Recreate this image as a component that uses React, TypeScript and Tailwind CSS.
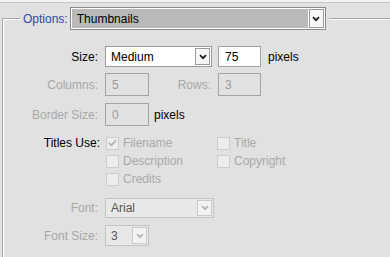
import React from 'react'

const font = { fontFamily: '"Liberation Sans", Arial, sans-serif' }

function Chevron({ color = '#222' }: { color?: string }) {
  return (
    <svg width="8" height="6" viewBox="0 0 8 6">
      <path d="M1 1.2 L4 4.2 L7 1.2" fill="none" stroke={color} strokeWidth="1.8" />
    </svg>
  )
}

function ArrowBox({ disabled = false }: { disabled?: boolean }) {
  return (
    <div
      className={
        disabled
          ? 'w-[15px] ml-[1px] flex items-center justify-center border border-[#cacaca] bg-[#f3f3f3]'
          : 'w-[15px] ml-[1px] flex items-center justify-center border border-[#9a9a9a] bg-[#f6f6f6]'
      }
    >
      <Chevron color={disabled ? '#b4b4b4' : '#1e1e1e'} />
    </div>
  )
}

function Check({ checked = false, label }: { checked?: boolean; label: string }) {
  return (
    <div className="h-[18px] flex items-center gap-[4px]">
      <div className="w-[13px] h-[13px] border border-[#cdcdcd] bg-[#ededed] flex items-center justify-center">
        {checked && (
          <svg width="9" height="8" viewBox="0 0 9 8">
            <path d="M1 4 L3.4 6.3 L8 1.2" fill="none" stroke="#b0b0b0" strokeWidth="1.7" />
          </svg>
        )}
      </div>
      <span className="text-[#a9a9a9]">{label}</span>
    </div>
  )
}

export default function App() {
  return (
    <div className="w-[390px] h-[257px] overflow-hidden bg-[#e1e1e1] text-[12px] leading-none text-black" style={font}>
      <div className="h-[3px] bg-[#f3f3f3] border-b border-[#c6c6c6]" />

      <fieldset className="mt-[4px] ml-[2px] -mr-[4px] h-[270px] border border-[#a6a6a6] shadow-[inset_1px_1px_0_#ffffff]">
        <legend className="ml-[17px] px-[3px] bg-[#e1e1e1] flex items-center">
          <span className="text-[#2d4a9e]">Options:</span>
          <div className="ml-[2px] w-[256px] h-[23px] flex border border-[#8a8a8a] bg-white p-[1px]">
            <div className="flex-1 bg-[#b9b9b9] flex items-center pl-[5px]">Thumbnails</div>
            <ArrowBox />
          </div>
        </legend>

        <div className="mt-[16px] flex flex-col">
          {/* Size */}
          <div className="h-[21px] flex items-center">
            <div className="w-[95px] text-right">Size:</div>
            <div className="ml-[7px] w-[107px] h-[21px] flex border border-[#9a9a9a] bg-white p-[1px]">
              <div className="flex-1 flex items-center pl-[4px]">Medium</div>
              <ArrowBox />
            </div>
            <div className="ml-[6px] w-[43px] h-[21px] border border-[#a2a2a2] bg-white flex items-center pl-[6px]">75</div>
            <span className="ml-[7px]">pixels</span>
          </div>

          {/* Columns / Rows */}
          <div className="mt-[6px] h-[23px] flex items-center text-[#a8a8a8]">
            <div className="w-[95px] text-right">Columns:</div>
            <div className="ml-[7px] w-[44px] h-[23px] border border-[#a4a4a4] flex items-center pl-[6px] text-[#9a9a9a]">5</div>
            <div className="w-[62px] text-right">Rows:</div>
            <div className="ml-[7px] w-[43px] h-[23px] border border-[#a4a4a4] flex items-center pl-[6px] text-[#9a9a9a]">3</div>
          </div>

          {/* Border Size */}
          <div className="mt-[7px] h-[23px] flex items-center">
            <div className="w-[95px] text-right text-[#a8a8a8]">Border Size:</div>
            <div className="ml-[7px] w-[44px] h-[23px] border border-[#a4a4a4] flex items-center pl-[6px] text-[#9a9a9a]">0</div>
            <span className="ml-[5px]">pixels</span>
          </div>

          {/* Titles Use */}
          <div className="mt-[8px] flex">
            <div className="w-[97px] text-right h-[18px] flex items-center justify-end">Titles Use:</div>
            <div className="ml-[6px] w-[111px] flex flex-col">
              <Check checked label="Filename" />
              <Check label="Description" />
              <Check label="Credits" />
            </div>
            <div className="flex flex-col">
              <Check label="Title" />
              <Check label="Copyright" />
            </div>
          </div>

          {/* Font */}
          <div className="mt-[10px] h-[20px] flex items-center">
            <div className="w-[95px] text-right text-[#a8a8a8]">Font:</div>
            <div className="ml-[7px] w-[109px] h-[20px] flex border border-[#c4c4c4] bg-[#e8e8e8] p-[1px]">
              <div className="flex-1 flex items-center pl-[4px] text-[#555555]">Arial</div>
              <ArrowBox disabled />
            </div>
          </div>

          {/* Font Size */}
          <div className="mt-[7px] h-[21px] flex items-center">
            <div className="w-[95px] text-right text-[#a8a8a8]">Font Size:</div>
            <div className="ml-[7px] w-[44px] h-[21px] flex border border-[#c4c4c4] bg-[#e8e8e8] p-[1px]">
              <div className="flex-1 flex items-center pl-[4px] text-[#555555]">3</div>
              <ArrowBox disabled />
            </div>
          </div>
        </div>
      </fieldset>
    </div>
  )
}
